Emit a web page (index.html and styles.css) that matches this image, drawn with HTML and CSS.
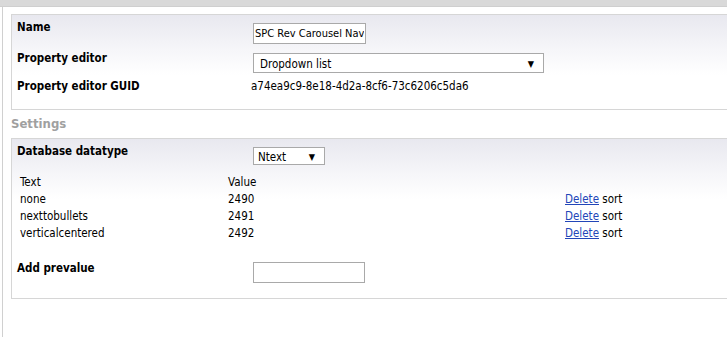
FILE: index.html
```html
<!DOCTYPE html>
<html>
<head>
    <link rel="stylesheet" href="styles.css">
    <title>Edit datatype</title>
</head>
<body>
    <div class="topbar"></div>
    <div class="page">
        <div class="panel panel-general">
            <div class="row row-name">
                <div class="label">Name</div>
                <input type="text" class="text-input name-input" value="SPC Rev Carousel Nav">
            </div>
            <div class="row row-editor">
                <div class="label">Property editor</div>
                <div class="fake-select editor-select">
                    <span>Dropdown list</span>
                    <span class="arrow">&#9660;</span>
                </div>
            </div>
            <div class="row row-guid">
                <div class="label">Property editor GUID</div>
                <div class="value">a74ea9c9-8e18-4d2a-8cf6-73c6206c5da6</div>
            </div>
        </div>

        <h2 class="section-title">Settings</h2>

        <div class="panel panel-settings">
            <div class="row row-dbtype">
                <div class="label">Database datatype</div>
                <div class="fake-select type-select">
                    <span>Ntext</span>
                    <span class="arrow">&#9660;</span>
                </div>
            </div>
            <table class="prevalues">
                <thead>
                    <tr>
                        <th class="col-text">Text</th>
                        <th class="col-value">Value</th>
                        <th></th>
                    </tr>
                </thead>
                <tbody>
                    <tr>
                        <td>none</td>
                        <td>2490</td>
                        <td><a href="#">Delete</a> sort</td>
                    </tr>
                    <tr>
                        <td>nexttobullets</td>
                        <td>2491</td>
                        <td><a href="#">Delete</a> sort</td>
                    </tr>
                    <tr>
                        <td>verticalcentered</td>
                        <td>2492</td>
                        <td><a href="#">Delete</a> sort</td>
                    </tr>
                </tbody>
            </table>
            <div class="row row-add">
                <div class="label">Add prevalue</div>
                <input type="text" class="text-input add-input" value="">
            </div>
        </div>
    </div>
</body>
</html>
```

FILE: styles.css
```css
html, body {
    margin: 0;
    height: 100%;
    overflow: hidden;
}

body {
    font-family: "DejaVu Sans Condensed", "DejaVu Sans", sans-serif;
    font-size: 11.5px;
    color: #000;
    background: #fff;
}

.topbar {
    height: 6px;
    background-color: #d9d9d9;
    border-bottom: 1px solid #cfcfcf;
}

.page {
    margin-left: 2px;
    padding: 7px 0 0 8px;
    border-left: 1px solid #d0d0d0;
    height: 100%;
    box-sizing: border-box;
}

.panel {
    width: 740px;
    border: 1px solid #d6d6d6;
    border-right: none;
    background: linear-gradient(#e8e8ef 0, #f6f6f9 35px, #fff 60px);
    padding: 0 0 0 5px;
}

.panel-general {
    padding-top: 3px;
    padding-bottom: 16px;
}

.row {
    display: flex;
    align-items: flex-start;
}

.label {
    width: 236px;
    padding-top: 2px;
    line-height: 14px;
    font-weight: bold;
    flex-shrink: 0;
}

.value {
    padding-top: 2px;
    line-height: 14px;
    margin-left: -2px;
}

.row-editor {
    margin-top: 5px;
}

.row-guid {
    margin-top: 4px;
}

.text-input {
    margin: 5px 0 0 0;
    padding: 0 1px;
    height: 21px;
    box-sizing: border-box;
    border: 1px solid #a9a9a9;
    font-family: inherit;
    font-size: 11px;
    color: #000;
    background: #fff;
}

.name-input {
    width: 113px;
}

.add-input {
    margin-top: 3px;
    width: 112px;
}

.fake-select {
    display: flex;
    justify-content: space-between;
    align-items: center;
    box-sizing: border-box;
    border: 1px solid #a9a9a9;
    background: #fff;
    padding: 1px 9px 0 6px;
}

.fake-select .arrow {
    font-size: 9px;
}

.editor-select {
    margin-top: 4px;
    width: 291px;
    height: 20px;
}

.type-select {
    margin-top: 5px;
    width: 72px;
    height: 18px;
    padding-left: 4px;
}

.section-title {
    margin: 6px 0 6px 0;
    font-size: 13px;
    line-height: 16px;
    color: #a0a0a0;
}

.panel-settings {
    padding-top: 3px;
    padding-bottom: 15px;
}

.prevalues {
    border-collapse: collapse;
    margin: 9px 0 0 3px;
    width: 612px;
}

.prevalues th,
.prevalues td {
    padding: 0;
    height: 17px;
    line-height: 17px;
    text-align: left;
    font-weight: normal;
}

.col-text {
    width: 208px;
}

.col-value {
    width: 337px;
}

.prevalues a {
    color: #2246b8;
}

.row-add {
    margin-top: 17px;
}
```
